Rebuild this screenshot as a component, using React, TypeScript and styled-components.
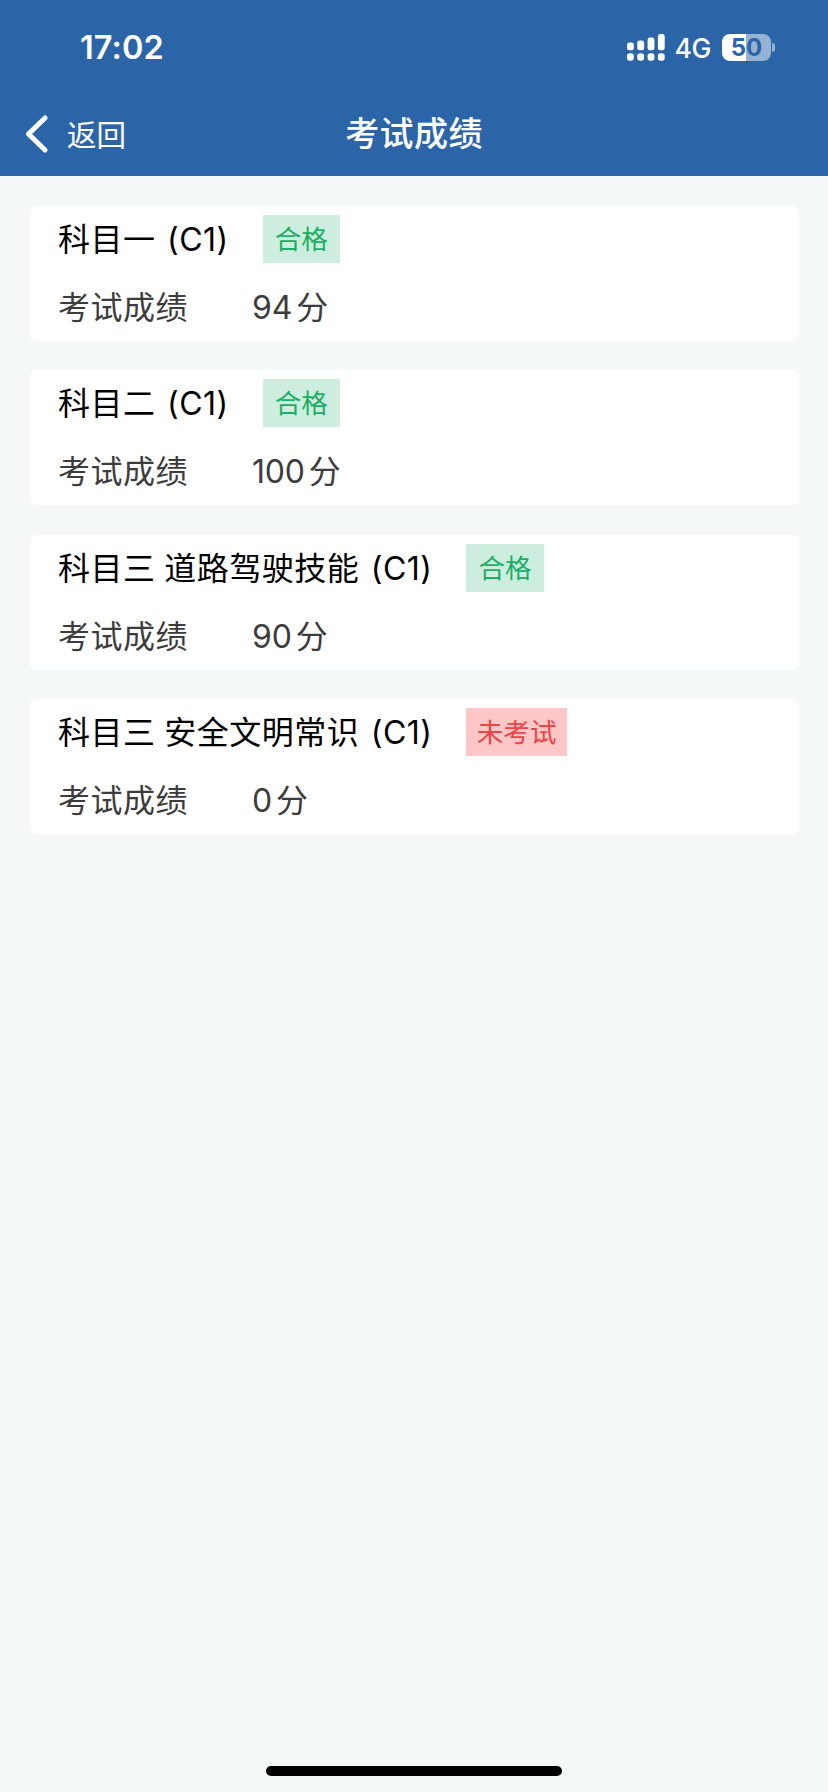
import React from "react";
import styled, { createGlobalStyle } from "styled-components";

const BLUE = "#2b65a8";

const GlobalStyle = createGlobalStyle`
  * { box-sizing: border-box; }
  body {
    margin: 0;
    background: #f4f8f8;
    font-family: Inter, "Noto Sans CJK SC", sans-serif;
  }
`;

const Screen = styled.div`
  display: flex;
  flex-direction: column;
  width: 828px;
  height: 1792px;
  background: #f4f8f8;
`;

const Header = styled.header`
  height: 176px;
  background: ${BLUE};
  color: #fff;
`;

const StatusBar = styled.div`
  display: flex;
  align-items: center;
  justify-content: space-between;
  height: 94px;
  padding: 0 53px 0 80px;
`;

const Clock = styled.span`
  padding-top: 2px;
  font-size: 32.5px;
  font-weight: 600;
  line-height: 40px;
  letter-spacing: 0.1px;
`;

const StatusIcons = styled.div`
  display: flex;
  align-items: center;
`;

const Network = styled.span`
  margin: 2px 11px 0 10px;
  font-size: 26.5px;
  line-height: 32px;
  letter-spacing: -0.4px;
  font-weight: 450;
`;

const Battery = styled.div`
  display: flex;
  align-items: center;
  gap: 1px;
`;

const BatteryBody = styled.div`
  width: 49px;
  height: 27px;
  border-radius: 8px;
  background: linear-gradient(90deg, #fff 50%, #95b2d3 50%);
  color: ${BLUE};
  font-size: 24px;
  font-weight: 650;
  line-height: 27px;
  text-align: center;
`;

const BatteryTip = styled.div`
  width: 3px;
  height: 9px;
  border-radius: 0 3px 3px 0;
  background: #95b2d3;
`;

const NavBar = styled.nav`
  display: grid;
  grid-template-columns: 1fr auto 1fr;
  align-items: center;
  height: 80px;
  padding: 0 25px;
`;

const BackButton = styled.button`
  display: flex;
  align-items: center;
  gap: 19px;
  padding: 0;
  border: 0;
  background: none;
  color: #fff;
  font: 400 29.5px/40px Inter, "Noto Sans CJK SC", sans-serif;
`;

const BackLabel = styled.span`
  padding-top: 1px;
`;

const PageTitle = styled.h1`
  margin: 0;
  font-size: 34px;
  font-weight: 500;
  line-height: 48px;
  letter-spacing: 0.4px;
`;

const ResultList = styled.main`
  display: flex;
  flex: 1;
  flex-direction: column;
  gap: 29.3px;
  padding: 30px 29px 0 30px;
`;

const Card = styled.section`
  display: flex;
  flex-direction: column;
  gap: 20px;
  height: 135px;
  padding: 9px 28px 10px;
  border-radius: 7px;
  background: #fff;
`;

const Row = styled.div`
  display: flex;
  align-items: center;
  height: 48px;
  font-size: 32px;
  line-height: 48px;
  letter-spacing: 0.5px;
  white-space: pre;
`;

const Subject = styled.span`
  padding-top: 2px;
  color: #000;
  word-spacing: -0.8px;
`;

const Code = styled.span`
  margin-left: 2px;
  letter-spacing: 0.5px;
  word-spacing: 0;
`;

const Badge = styled.span<{ $passed: boolean }>`
  height: 48px;
  margin-left: 34px;
  padding: 0 ${(p) => (p.$passed ? 12 : 10.3)}px;
  background: ${(p) => (p.$passed ? "#cdeedf" : "#fdc6c7")};
  color: ${(p) => (p.$passed ? "#1bae64" : "#ee4346")};
  font-size: 26.6px;
  letter-spacing: 0;
  line-height: 49px;
`;

const Label = styled.span`
  width: 194px;
  padding-top: 2px;
  color: #3c3c3c;
`;

const Score = styled.span`
  padding-top: 2px;
  color: #3c3c3c;
  letter-spacing: -0.2px;
`;

const Unit = styled.span`
  margin-left: 4px;
  padding-top: 2px;
  color: #3c3c3c;
`;

const HomeArea = styled.footer`
  display: flex;
  justify-content: center;
  height: 26px;
`;

const HomeIndicator = styled.div`
  width: 296px;
  height: 10px;
  border-radius: 5px;
  background: #000;
`;

const results = [
  { subject: "科目一", passed: true, status: "合格", score: 94 },
  { subject: "科目二", passed: true, status: "合格", score: 100 },
  { subject: "科目三 道路驾驶技能", passed: true, status: "合格", score: 90 },
  { subject: "科目三 安全文明常识", passed: false, status: "未考试", score: 0 },
];

function SignalIcon() {
  const tops = [8.5, 6.5, 3.5, 0];
  return (
    <svg width="38" height="27" viewBox="0 0 38 27" fill="#fff">
      {tops.map((y, i) => (
        <React.Fragment key={y}>
          <rect x={i * 10.3} y={y} width="6.8" height={16.3 - y} rx="2.4" />
          <rect x={i * 10.3} y="19.2" width="6.8" height="7.6" rx="2.8" />
        </React.Fragment>
      ))}
    </svg>
  );
}

function BackIcon() {
  return (
    <svg width="23" height="38" viewBox="0 0 23 38" fill="none" stroke="#fff" strokeWidth="5" strokeLinecap="round" strokeLinejoin="round">
      <path d="M20 3 L3.5 19 L20 35" />
    </svg>
  );
}

export default function App() {
  return (
    <Screen lang="zh-CN">
      <GlobalStyle />
      <Header>
        <StatusBar>
          <Clock>17:02</Clock>
          <StatusIcons>
            <SignalIcon />
            <Network>4G</Network>
            <Battery>
              <BatteryBody>50</BatteryBody>
              <BatteryTip />
            </Battery>
          </StatusIcons>
        </StatusBar>
        <NavBar>
          <BackButton>
            <BackIcon />
            <BackLabel>返回</BackLabel>
          </BackButton>
          <PageTitle>考试成绩</PageTitle>
        </NavBar>
      </Header>
      <ResultList>
        {results.map((r) => (
          <Card key={r.subject}>
            <Row>
              <Subject>
                {r.subject}
                <Code> (C1)</Code>
              </Subject>
              <Badge $passed={r.passed}>{r.status}</Badge>
            </Row>
            <Row>
              <Label>考试成绩</Label>
              <Score>{r.score}</Score>
              <Unit>分</Unit>
            </Row>
          </Card>
        ))}
      </ResultList>
      <HomeArea>
        <HomeIndicator />
      </HomeArea>
    </Screen>
  );
}
